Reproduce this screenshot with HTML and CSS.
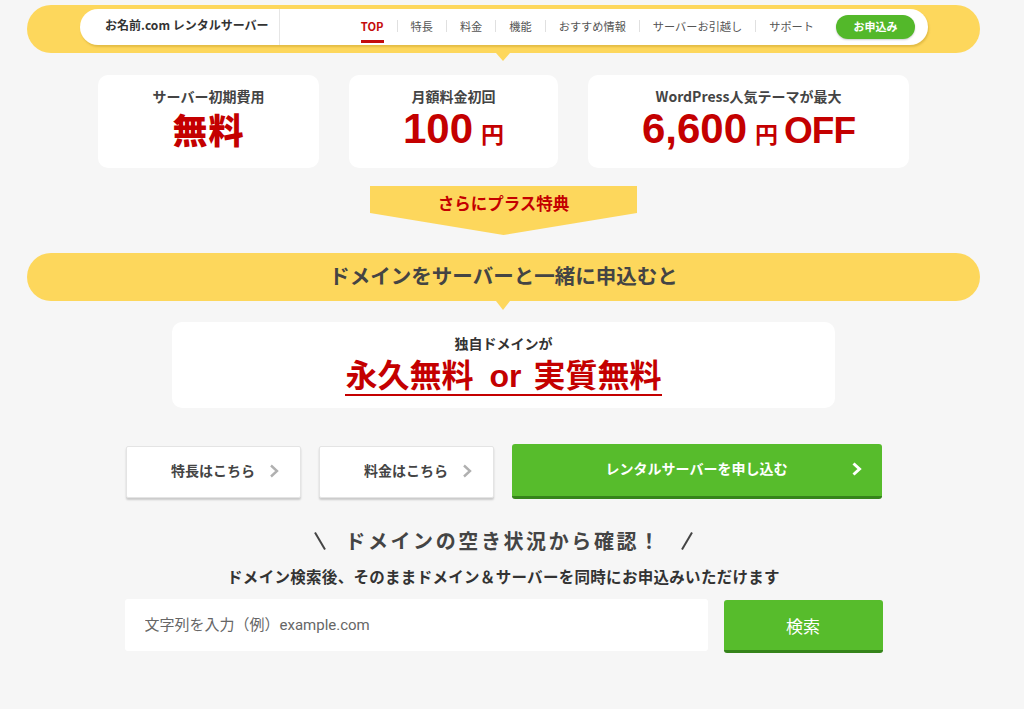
FILE: index.html
```html
<!DOCTYPE html>
<html lang="ja">
<head>
<meta charset="utf-8">
<title>お名前.com レンタルサーバー</title>
<link rel="stylesheet" href="styles.css">
</head>
<body>
<div class="page">
  <header class="header">
    <div class="header-pill">
      <div class="brand">お名前.com レンタルサーバー</div>
      <nav class="nav">
        <a class="nav-item nav-active">TOP</a>
        <a class="nav-item">特長</a>
        <a class="nav-item">料金</a>
        <a class="nav-item">機能</a>
        <a class="nav-item">おすすめ情報</a>
        <a class="nav-item">サーバーお引越し</a>
        <a class="nav-item">サポート</a>
        <a class="nav-apply">お申込み</a>
      </nav>
    </div>
  </header>

  <section class="cards">
    <div class="card card-1">
      <div class="card-title">サーバー初期費用</div>
      <div class="card-value"><span class="v-kanji">無料</span></div>
    </div>
    <div class="card card-2">
      <div class="card-title">月額料金初回</div>
      <div class="card-value"><span class="v-num">100</span><span class="v-yen">円</span></div>
    </div>
    <div class="card card-3">
      <div class="card-title">WordPress人気テーマが最大</div>
      <div class="card-value"><span class="v-num">6,600</span><span class="v-yen">円</span><span class="v-off">OFF</span></div>
    </div>
  </section>

  <div class="ribbon">さらにプラス特典</div>

  <div class="banner">ドメインをサーバーと一緒に申込むと</div>

  <section class="domain-card">
    <div class="domain-title">独自ドメインが</div>
    <div class="domain-value"><span class="dv">永久無料<span class="dv-or">or</span>実質無料</span></div>
  </section>

  <section class="actions">
    <a class="btn-white">特長はこちら<svg class="chev" width="10" height="14" viewBox="0 0 10 14"><polyline points="2,1.5 8,7 2,12.5" fill="none" stroke="#b0b0b0" stroke-width="2.4"/></svg></a>
    <a class="btn-white">料金はこちら<svg class="chev" width="10" height="14" viewBox="0 0 10 14"><polyline points="2,1.5 8,7 2,12.5" fill="none" stroke="#b0b0b0" stroke-width="2.4"/></svg></a>
    <a class="btn-green">レンタルサーバーを申し込む<svg class="chev chev-g" width="11" height="14" viewBox="0 0 11 14"><polyline points="2.5,1.5 8.5,7 2.5,12.5" fill="none" stroke="#ffffff" stroke-width="3"/></svg></a>
  </section>

  <h2 class="search-heading">
    <svg class="slash" width="12" height="18" viewBox="0 0 12 18"><line x1="1" y1="0.5" x2="11" y2="17.5" stroke="#444" stroke-width="2"/></svg>
    <span class="sh-text">ドメインの空き状況から確認！</span>
    <svg class="slash" width="12" height="18" viewBox="0 0 12 18"><line x1="11" y1="0.5" x2="1" y2="17.5" stroke="#444" stroke-width="2"/></svg>
  </h2>
  <p class="search-sub">ドメイン検索後、そのままドメイン＆サーバーを同時にお申込みいただけます</p>

  <form class="search">
    <input class="search-input" type="text" placeholder="文字列を入力（例）example.com">
    <button class="search-btn" type="button">検索</button>
  </form>
</div>
</body>
</html>
```

FILE: styles.css
```css
* { box-sizing: border-box; margin: 0; padding: 0; }

body {
  background: #f6f6f6;
  font-family: "Noto Sans CJK JP", "Noto Sans", sans-serif;
  color: #444;
  width: 1007px;
}

.page {
  width: 953px;
  margin: 0 27px;
}

/* header */
.header {
  position: relative;
  margin-top: 5px;
  height: 48px;
  background: #fdd75c;
  border-radius: 24px;
  padding: 4px 52px 0 53px;
}
.header::after {
  content: "";
  position: absolute;
  left: 469px;
  bottom: -8px;
  border-left: 7px solid transparent;
  border-right: 7px solid transparent;
  border-top: 8px solid #fdd75c;
}
.header-pill {
  display: flex;
  height: 36px;
  background: #fff;
  border-radius: 18px;
  box-shadow: 1px 2px 2px rgba(150, 110, 0, 0.25);
}
.brand {
  width: 200px;
  border-right: 1px solid #e6e6e6;
  padding-left: 25px;
  font-size: 12px;
  font-weight: 700;
  color: #333;
  line-height: 32px;
}
.nav {
  flex: 1;
  display: flex;
  align-items: center;
  justify-content: flex-end;
  padding: 0 13px 3px 0;
}
.nav-item {
  position: relative;
  font-size: 11.2px;
  color: #555;
  line-height: 12px;
  padding: 0 13px;
  border-left: 1px solid #e0e0e0;
}
.nav-item:first-child { border-left: none; }
.nav-active {
  color: #c40c0c;
  font-weight: 700;
}
.nav-active::after {
  content: "";
  position: absolute;
  left: 13px;
  right: 13px;
  top: 20px;
  height: 3px;
  background: #c40c0c;
}
.nav-apply {
  margin-left: 9px;
  margin-top: 3px;
  width: 79px;
  height: 24px;
  border-radius: 12px;
  background: #53b82a;
  color: #fff;
  font-size: 11px;
  font-weight: 700;
  text-align: center;
  line-height: 23px;
  box-shadow: 0 1px 2px rgba(0, 0, 0, 0.2);
}

/* cards */
.cards {
  display: flex;
  justify-content: center;
  gap: 30px;
  margin-top: 22px;
}
.card {
  height: 93px;
  background: #fff;
  border-radius: 10px;
  padding-top: 12px;
  text-align: center;
}
.card-1 { width: 221px; }
.card-2 { width: 209px; }
.card-3 { width: 321px; }
.card-title {
  font-size: 14px;
  font-weight: 700;
  line-height: 18px;
  color: #444;
}
.card-value {
  margin-top: 2px;
  height: 44px;
  display: flex;
  justify-content: center;
  align-items: baseline;
  color: #c40000;
  font-weight: 700;
  line-height: 44px;
}
.v-kanji {
  font-size: 35px;
  font-weight: 900;
  letter-spacing: 1px;
}
.v-num {
  font-family: "Liberation Sans", Arial, sans-serif;
  font-size: 42px;
}
.v-yen {
  font-size: 23px;
  margin-left: 8px;
}
.v-off {
  font-family: "Liberation Sans", Arial, sans-serif;
  font-size: 37px;
  letter-spacing: -1px;
  margin-left: 6px;
}

/* ribbon */
.ribbon {
  width: 267px;
  height: 49px;
  margin: 18px auto 0;
  background: #fdd75c;
  clip-path: polygon(0 0, 100% 0, 100% 27px, 50% 100%, 0 27px);
  color: #c40000;
  font-size: 16.5px;
  font-weight: 700;
  text-align: center;
  line-height: 35px;
}

/* banner */
.banner {
  position: relative;
  margin-top: 18px;
  height: 48px;
  background: #fdd75c;
  border-radius: 24px;
  text-align: center;
  font-size: 20.5px;
  font-weight: 700;
  line-height: 45px;
  color: #444;
}
.banner::after {
  content: "";
  position: absolute;
  left: 469px;
  bottom: -9px;
  border-left: 7px solid transparent;
  border-right: 7px solid transparent;
  border-top: 9px solid #fdd75c;
}

/* domain card */
.domain-card {
  width: 663px;
  height: 86px;
  margin: 21px auto 0;
  background: #fff;
  border-radius: 10px;
  padding-top: 11px;
  text-align: center;
}
.domain-title {
  font-size: 14px;
  font-weight: 700;
  line-height: 20px;
  color: #333;
}
.domain-value {
  margin-top: 3px;
}
.dv {
  display: inline-block;
  color: #c40000;
  font-size: 32px;
  font-weight: 700;
  line-height: 35px;
  border-bottom: 2px solid #c40000;
}
.dv-or {
  font-family: "Liberation Sans", Arial, sans-serif;
  padding: 0 12px 0 16px;
}

/* action buttons */
.actions {
  display: flex;
  justify-content: center;
  align-items: center;
  gap: 18px;
  margin-top: 36px;
  height: 55px;
}
.btn-white,
.btn-green {
  position: relative;
  display: block;
  text-align: center;
  font-size: 14px;
  font-weight: 700;
}
.btn-white {
  width: 175px;
  height: 52px;
  line-height: 46px;
  background: #fff;
  border: 1px solid #e4e4e4;
  box-shadow: 0 2px 2px rgba(0, 0, 0, 0.18);
  border-radius: 2px;
  color: #444;
}
.btn-green {
  width: 370px;
  height: 55px;
  line-height: 48px;
  background: #57bc2c;
  border-bottom: 3px solid #35841a;
  border-radius: 3px;
  color: #fff;
}
.chev {
  position: absolute;
  right: 21px;
  top: 17px;
}
.chev-g {
  right: 20px;
  top: 18px;
}

/* search */
.search-heading {
  margin-top: 27px;
  height: 30px;
  display: flex;
  justify-content: center;
  align-items: center;
  gap: 19px;
  font-size: 20px;
  font-weight: 700;
  color: #444;
}
.sh-text {
  letter-spacing: 2.6px;
  line-height: 30px;
}
.search-sub {
  margin-top: 9px;
  text-align: center;
  font-size: 15.5px;
  font-weight: 700;
  letter-spacing: 0.3px;
  line-height: 22px;
  color: #333;
}
.search {
  display: flex;
  justify-content: center;
  gap: 16px;
  margin-top: 12px;
}
.search-input {
  width: 583px;
  height: 52px;
  border: none;
  border-radius: 3px;
  background: #fff;
  padding-left: 20px;
  font-family: Roboto, "Noto Sans CJK JP", sans-serif;
  font-size: 15px;
  color: #333;
  outline: none;
}
.search-input::placeholder {
  color: #666;
}
.search-btn {
  width: 159px;
  height: 53px;
  margin-top: 1px;
  border: none;
  border-bottom: 3px solid #35841a;
  border-radius: 3px;
  background: #57bc2c;
  color: #fff;
  font-family: "Noto Sans CJK JP", sans-serif;
  font-size: 17px;
}
```
